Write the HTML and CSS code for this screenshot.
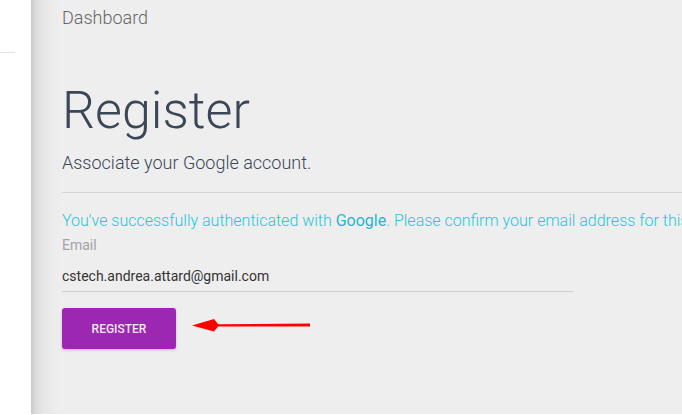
FILE: index.html
```html
<!DOCTYPE html>
<html>
<head>
<meta charset="utf-8">
<link rel="stylesheet" href="styles.css">
</head>
<body>
<div class="page">
  <aside class="side">
    <div class="side-line"></div>
  </aside>
  <main class="main">
    <div class="crumb">Dashboard</div>
    <h1 class="title">Register</h1>
    <p class="subtitle">Associate your Google account.</p>
    <hr class="divider">
    <p class="notice">You've successfully authenticated with <strong>Google</strong>. Please confirm your email address for this site.</p>
    <div class="field">
      <label class="label">Email</label>
      <div class="input">cstech.andrea.attard@gmail.com</div>
    </div>
    <div class="actions">
      <button class="btn">REGISTER</button>
      <svg class="arrow" width="122" height="16" viewBox="0 0 122 16">
        <path d="M26 7.2 L118 6.6 L118 9.4 L26 9.6 Z" fill="#ff0000"/>
        <path d="M0 8.5 L22 2 L27 8.3 L22 14.5 Z" fill="#ff0000"/>
      </svg>
    </div>
  </main>
</div>
</body>
</html>
```
FILE: styles.css
```css
html, body {
  margin: 0;
  padding: 0;
  background: #ffffff;
}
body {
  font-family: Roboto, "Liberation Sans", sans-serif;
  width: 682px;
  height: 415px;
  overflow: hidden;
}
.page {
  display: flex;
  height: 414px;
}
.side {
  width: 31px;
  flex: none;
  background: #fff;
  padding-top: 52px;
  box-sizing: border-box;
}
.side-line {
  width: 15px;
  height: 1px;
  background: #e3e3e3;
}
.main {
  flex: 1;
  min-width: 0;
  background: linear-gradient(to right, #c9c9c9 0px, #dcdcdc 5px, #e7e7e7 13px, #ececec 22px, #eeeeee 30px);
  padding-left: 31px;
  box-sizing: border-box;
  overflow: hidden;
}
.crumb {
  font-weight: 300;
  font-size: 18px;
  color: #666;
  margin-top: 7px;
  line-height: 22px;
}
.title {
  font-weight: 300;
  font-size: 52px;
  color: #3b4656;
  margin: 52px 0 0;
  line-height: 60px;
}
.subtitle {
  font-weight: 300;
  font-size: 18px;
  color: #3b4656;
  margin: 11px 0 0;
  line-height: 22px;
}
.divider {
  border: 0;
  border-top: 1px solid #d4d4d4;
  margin: 18px 0 0;
}
.notice {
  white-space: nowrap;
  font-weight: 300;
  font-size: 16px;
  color: #26c6da;
  margin: 18px 0 0;
  line-height: 20px;
}
.notice strong {
  font-weight: 400;
  color: #1fb8cd;
}
.field {
  width: 511px;
  margin-top: 6px;
}
.label {
  display: block;
  font-size: 14px;
  color: #a3a3a3;
  line-height: 16px;
}
.input {
  font-size: 14px;
  color: #333;
  line-height: 20px;
  padding: 13px 0 5px;
  border-bottom: 1px solid #d0d0d0;
}
.actions {
  display: flex;
  align-items: center;
  margin-top: 16px;
  position: relative;
}
.btn {
  width: 114px;
  height: 41px;
  border: 0;
  border-radius: 3px;
  background: #9c27b0;
  color: #f4e6f7;
  font-family: Roboto, "Liberation Sans", sans-serif;
  font-weight: 500;
  font-size: 12px;
  box-shadow: 0 1px 3px rgba(0,0,0,.22);
}
.arrow {
  position: absolute;
  left: 130px;
  top: 9px;
}
```
